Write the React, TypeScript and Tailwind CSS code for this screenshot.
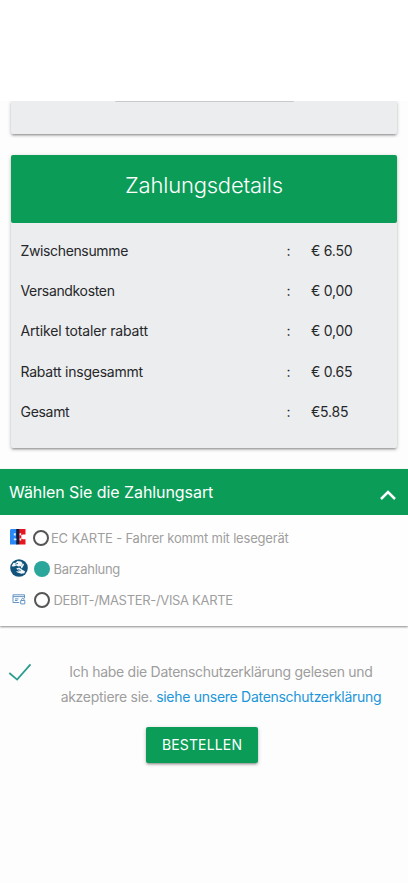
import React from 'react';

const rows = [
  { label: 'Zwischensumme', value: '€ 6.50', tracking: 'tracking-[-0.36px]' },
  { label: 'Versandkosten', value: '€ 0,00', tracking: 'tracking-[-0.34px]' },
  { label: 'Artikel totaler rabatt', value: '€ 0,00', tracking: 'tracking-[-0.15px]' },
  { label: 'Rabatt insgesammt', value: '€ 0.65', tracking: 'tracking-[-0.23px]' },
  { label: 'Gesamt', value: '€5.85', tracking: 'tracking-[-0.3px]' },
];

const cardShadow =
  'shadow-[0_2px_2px_0_rgba(0,0,0,0.14),0_3px_1px_-2px_rgba(0,0,0,0.12),0_1px_4px_0_rgba(0,0,0,0.2)]';

function EcIcon() {
  return (
    <svg className="relative -top-px h-4 w-4" viewBox="0 0 16 16">
      <path d="M1 0H7V15.5H0V1Z" fill="#2988f5" />
      <path d="M9 0H15.5V5.4H12.4V10.3H15.5V15.5H9Z" fill="#e5161f" />
      <path d="M6.2 0H9.3V15.5H6.2Z" fill="#101c3c" />
      <path d="M3.8 4.2H5.8V6.6H3.8ZM3.8 9.4H6.4V11.2H3.8Z" fill="#d5ecff" />
      <path d="M9.6 4.3H11.2V6H16V9.8H11.2V11.4H9.6Z" fill="#fff" />
      <path d="M9.2 6.3H11.3V9.4H9.2Z" fill="#e5161f" />
    </svg>
  );
}

function CashIcon() {
  return (
    <svg className="relative -top-px h-[18px] w-[18px]" viewBox="0 0 18 18">
      <circle cx="9" cy="9" r="8.8" fill="#11537b" />
      <path d="M1.6 7.2 3.3 4 5.8 3.7 7.4 2 11 2.6 12.6 4.2 10.9 6.9 8.6 7.6 6.2 6.6 4 7.6Z" fill="#f4f8fa" />
      <path d="M6.2 9.6 9.2 8.5 12.2 10.8 15 12.2 14.4 14.2 11.4 14.8 7.4 13.4 6 12.3 9.6 12.4Z" fill="#f4f8fa" />
      <path d="M10.6 7.5 13 4.5l1.1 1-2.3 4.2Z" fill="#f4f8fa" />
      <path d="M5.2 5.2 8 4.4M8.2 10.2l2.6 1.7" stroke="#11537b" strokeWidth=".8" />
    </svg>
  );
}

function CardIcon() {
  return (
    <svg className="h-[11px] w-[14px]" viewBox="0 0 14 11" fill="none" stroke="#6595c4">
      <path d="M7.3 8.5H1V.8H12.5V4.3" />
      <path d="M1 2.6H12.5M3 4.9H6.5M3 6.5H5.5" />
      <path d="M8.7 6.5h4.1v3.4H8.7ZM9.6 6.5V5.3c0-1.3 2.3-1.3 2.3 0v1.2" />
    </svg>
  );
}

function Radio({ checked = false }: { checked?: boolean }) {
  return checked ? (
    <span className="block h-4 w-4 shrink-0 rounded-full bg-[#2aa69a]" />
  ) : (
    <span className="block h-4 w-4 shrink-0 rounded-full border-2 border-[#555]" />
  );
}

export default function App() {
  return (
    <main className="h-[883px] w-[408px] overflow-hidden bg-white pt-[101px] font-['Inter','Liberation_Sans',sans-serif] text-[#262729]">
      <div className="h-[782px] overflow-hidden bg-[#fdfdfd]">
        <section className={`ml-[11px] h-[33px] w-[386px] rounded-b-[2px] bg-[#ecedef] ${cardShadow}`}>
          <div className="mx-auto h-px w-[179px] rounded-b bg-[#c9cacd]" />
        </section>

        <section className={`mt-[21px] ml-[11px] h-[293px] w-[386px] rounded-[2px] bg-[#ecedef] ${cardShadow}`}>
          <header className="h-[68px] rounded-[2px] bg-[#0b9c57] pt-[14px] text-center text-[22px] leading-8 font-light tracking-[-0.2px] text-white">
            Zahlungsdetails
          </header>
          <div className="pt-[7px]">
            {rows.map((row) => (
              <div key={row.label} className="flex h-[40.3px] items-center text-[14px] tracking-[-0.23px]">
                <span className={`w-[265px] pl-[9.5px] ${row.tracking}`}>{row.label}</span>
                <span className="w-[25px] text-center">:</span>
                <span className="pl-[10px]">{row.value}</span>
              </div>
            ))}
          </div>
        </section>

        <section className="mt-[21px] h-[157px] bg-[#fefefe] shadow-[0_1px_2px_0_rgba(0,0,0,0.45)]">
          <header className="flex h-[46px] items-start justify-between bg-[#0b9c57] pr-[12px] pl-[9px] text-white">
            <h2 className="pt-[11px] text-[16px] leading-6 font-normal tracking-[-0.07px]">Wählen Sie die Zahlungsart</h2>
            <svg className="mt-[21px] h-[10px] w-4" viewBox="0 0 16 10" fill="none" stroke="currentColor" strokeWidth="2.5">
              <path d="m1 9 7-7 7 7" />
            </svg>
          </header>
          <div className="pt-[7px] text-[13px] text-[#9e9e9e]">
            <label className="flex h-[31px] items-center pl-[10px]">
              <EcIcon />
              <span className="ml-[6.5px]"><Radio /></span>
              <span className="ml-[2.5px] pt-[2px] tracking-[-0.19px]">EC KARTE - Fahrer kommt mit lesegerät</span>
            </label>
            <label className="flex h-[31px] items-center pl-[10px]">
              <CashIcon />
              <span className="ml-[6px]"><Radio checked /></span>
              <span className="ml-[3.5px] pt-[2px] tracking-[-0.28px]">Barzahlung</span>
            </label>
            <label className="flex h-[31px] items-center pl-[12px]">
              <CardIcon />
              <span className="ml-[8px]"><Radio /></span>
              <span className="ml-[3.5px] pt-[2px] tracking-[-0.32px]">DEBIT-/MASTER-/VISA KARTE</span>
            </label>
          </div>
        </section>

        <section className="mt-[33px] flex h-[52px] text-[14px] leading-[25px] text-[#9e9e9e]">
          <svg className="mt-[4px] ml-[8px] h-[20px] w-[24px] shrink-0" viewBox="0 0 24 20" fill="none" stroke="#2a9d8f" strokeWidth="1.8">
            <path d="m1.3 10 7.8 6.6L22.5 1.3" />
          </svg>
          <p className="ml-[21px] w-[336px] text-center whitespace-nowrap">
            <span className="tracking-[-0.28px]">Ich habe die Datenschutzerklärung gelesen und</span>
            <br />
            <span className="tracking-[-0.28px]">
              akzeptiere sie. <a className="text-[#2196d9]">siehe unsere Datenschutzerklärung</a>
            </span>
          </p>
        </section>

        <button className={`mt-[16px] ml-[146px] flex h-[36px] w-[112px] items-center justify-center rounded-[2px] bg-[#0b9c57] pb-px text-[14px] tracking-[0.15px] text-white ${cardShadow}`}>
          BESTELLEN
        </button>
      </div>
    </main>
  );
}
